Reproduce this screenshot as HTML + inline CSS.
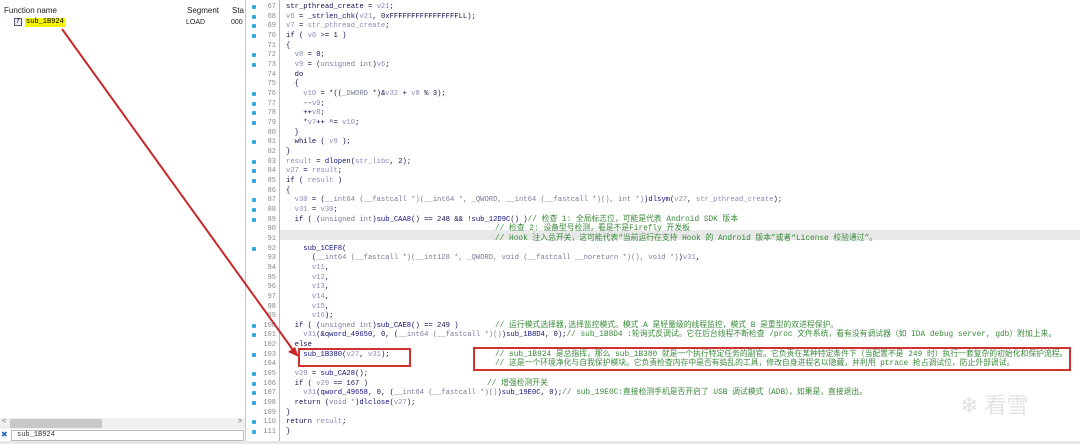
<!DOCTYPE html>
<html><head><meta charset="utf-8"><style>
*{margin:0;padding:0;box-sizing:border-box}
body{width:1080px;height:444px;overflow:hidden;background:#fff;position:relative;font-family:"Liberation Sans","Noto Sans CJK SC",sans-serif}
#left{position:absolute;left:0;top:0;width:246px;height:444px;background:#fff;border-right:1px solid #c8c8c8}
.hdr{position:absolute;top:6px;font-size:8px;color:#222}
#gut{position:absolute;left:247px;top:0;width:33px;height:444px;background:#fff;border-right:1px solid #9ec4e0}
.ln{position:absolute;left:0;width:1080px;height:10px;font-family:"Liberation Mono","Noto Sans CJK SC",monospace;font-size:7.2px;line-height:10px;white-space:pre;color:#101050}
.n{position:absolute;left:256px;width:20px;text-align:right;color:#8a8a8a;font-size:7px}
.d{position:absolute;left:252px;top:3px;width:4px;height:4px;background:#33aadd;border-radius:1px}
.t{position:absolute;left:286px}
.cc{position:absolute;left:495px;color:#3a8a3a;font-size:7.8px}
.v{color:#8a8ab8}.f{color:#101080}.c{color:#3a8a3a;font-size:7.8px}.g{color:#7a7a9a}
</style></head><body>
<div id="left">
<div class="hdr" style="left:4px">Function name</div>
<div class="hdr" style="left:187px">Segment</div>
<div class="hdr" style="left:232px">Sta</div>
<div style="position:absolute;left:14px;top:18px;width:8px;height:8px;border:1px solid #557;background:#eef;font-size:6px;line-height:6px;text-align:center;font-style:italic">f</div>
<div style="position:absolute;left:25px;top:18px;height:9px;background:#f4f400;font-size:7px;line-height:9px;padding:0 1px;font-family:'Liberation Mono',monospace">sub_1B924</div>
<div style="position:absolute;left:186px;top:19px;font-size:7px;color:#222">LOAD</div>
<div style="position:absolute;left:231px;top:19px;font-size:7px;color:#222">000</div>
<div style="position:absolute;left:0;top:418px;width:245px;height:11px;background:#f0f0f0"></div>
<div style="position:absolute;left:10px;top:419px;width:92px;height:9px;background:#c8c8c8"></div>
<div style="position:absolute;left:2px;top:418px;font-size:7px;color:#666">&lt;</div>
<div style="position:absolute;left:238px;top:418px;font-size:7px;color:#666">&gt;</div>
<div style="position:absolute;left:1px;top:430px;font-size:8px;color:#2266cc">✖</div>
<div style="position:absolute;left:11px;top:430px;width:233px;height:11px;border:1px solid #bbb;font-size:7px;line-height:9px;padding-left:5px;font-family:'Liberation Mono',monospace;color:#333">sub_1B924</div>
</div>
<div id="gut"></div>
<div style="position:absolute;left:280px;top:230px;width:800px;height:10px;background:#e8e8e8"></div>
<div id="code"></div>
<div style="position:absolute;left:298px;top:348px;width:113px;height:19px;border:2px solid #d03030"></div>
<div style="position:absolute;left:473px;top:347px;width:598px;height:24px;border:2px solid #d03030"></div>
<svg style="position:absolute;left:0;top:0" width="1080" height="444"><line x1="62" y1="29" x2="293" y2="350" stroke="#c82828" stroke-width="2"/><polygon points="299,357 288,352 295,347" fill="#c82828"/></svg>
<div style="position:absolute;left:960px;top:388px;font-size:22px;color:#e2e2e2">❄ 看雪</div>
<div style="position:absolute;left:0;top:441px;width:1080px;height:3px;background:#e8e8e8"></div>
<script>
const L=[
[67,1,'str_pthread_create = <span class=v>v21</span>;'],
[68,1,'<span class=v>v6</span> = <span class=f>_strlen_chk</span>(<span class=v>v21</span>, 0xFFFFFFFFFFFFFFFFLL);'],
[69,1,'<span class=v>v7</span> = <span class=v>str_pthread_create</span>;'],
[70,1,'if ( <span class=v>v6</span> >= 1 )'],
[71,0,'{'],
[72,1,'  <span class=v>v8</span> = 0;'],
[73,1,'  <span class=v>v9</span> = (<span class=g>unsigned int</span>)<span class=v>v6</span>;'],
[74,0,'  do'],
[75,0,'  {'],
[76,1,'    <span class=v>v10</span> = *((<span class=g>_DWORD</span> *)&amp;<span class=v>v32</span> + <span class=v>v8</span> % 3);'],
[77,1,'    --<span class=v>v9</span>;'],
[78,1,'    ++<span class=v>v8</span>;'],
[79,1,'    *<span class=v>v7</span>++ ^= <span class=v>v10</span>;'],
[80,0,'  }'],
[81,1,'  while ( <span class=v>v9</span> );'],
[82,0,'}'],
[83,1,'<span class=v>result</span> = <span class=f>dlopen</span>(<span class=v>str_libc</span>, 2);'],
[84,1,'<span class=v>v27</span> = <span class=v>result</span>;'],
[85,1,'if ( <span class=v>result</span> )'],
[86,0,'{'],
[87,1,'  <span class=v>v30</span> = (<span class=g>__int64 (__fastcall *)(__int64 *, _QWORD, __int64 (__fastcall *)(), int *)</span>)<span class=f>dlsym</span>(<span class=v>v27</span>, <span class=v>str_pthread_create</span>);'],
[88,1,'  <span class=v>v31</span> = <span class=v>v30</span>;'],
[89,1,'  if ( (<span class=g>unsigned int</span>)<span class=f>sub_CAA8</span>() == 248 &amp;&amp; !<span class=f>sub_12D9C</span>() )<span class=c>// 检查 1: 全局标志位，可能是代表 Android SDK 版本</span>'],
[90,0,'','// 检查 2: 设备型号检测，看是不是Firefly 开发板'],
[91,0,'','// Hook 注入总开关，这可能代表“当前运行在支持 Hook 的 Android 版本”或者“License 校验通过”。'],
[92,1,'    <span class=f>sub_1CEF8</span>('],
[93,0,'      (<span class=g>__int64 (__fastcall *)(__int128 *, _QWORD, void (__fastcall __noreturn *)(), void *)</span>)<span class=v>v31</span>,'],
[94,0,'      <span class=v>v11</span>,'],
[95,0,'      <span class=v>v12</span>,'],
[96,0,'      <span class=v>v13</span>,'],
[97,0,'      <span class=v>v14</span>,'],
[98,0,'      <span class=v>v15</span>,'],
[99,0,'      <span class=v>v16</span>);'],
[100,1,'  if ( (<span class=g>unsigned int</span>)<span class=f>sub_CAE8</span>() == 249 )','// 运行模式选择器,选择监控模式。模式 A 是轻量级的线程监控，模式 B 是重型的双进程保护。'],
[101,1,'    <span class=v>v31</span>(&amp;<span class=f>qword_49650</span>, 0, (<span class=g>__int64 (__fastcall *)()</span>)<span class=f>sub_1B8D4</span>, 0);<span class=c>// sub_1B8D4 :轮询式反调试。它在后台线程不断检查 /proc 文件系统，看有没有调试器（如 IDA debug server, gdb）附加上来。</span>'],
[102,0,'  else'],
[103,1,'    <span class=f>sub_1B380</span>(<span class=v>v27</span>, <span class=v>v31</span>);','// sub_1B924 是总指挥，那么 sub_1B380 就是一个执行特定任务的副官。它负责在某种特定条件下（当配置不是 249 时）执行一套复杂的初始化和保护流程。'],
[104,0,'','// 这是一个环境净化与自我保护模块。它负责检查内存中是否有捣乱的工具，修改自身进程名以隐藏，并利用 ptrace 抢占调试位，防止外部调试。'],
[105,1,'  <span class=v>v29</span> = <span class=f>sub_CA28</span>();'],
[106,1,'  if ( <span class=v>v29</span> == 167 )','// 增强检测开关',487],
[107,1,'    <span class=v>v31</span>(<span class=f>qword_49658</span>, 0, (<span class=g>__int64 (__fastcall *)()</span>)<span class=f>sub_19E0C</span>, 0);<span class=c>// sub_19E0C:直接检测手机是否开启了 USB 调试模式（ADB），如果是，直接退出。</span>'],
[108,1,'  return (<span class=g>void *</span>)<span class=f>dlclose</span>(<span class=v>v27</span>);'],
[109,0,'}'],
[110,1,'return <span class=v>result</span>;'],
[111,1,'}']];
let h='';
for(const [n,d,t,c,x] of L){const y=2+(n-67)*9.66;
h+=`<div class=ln style="top:${y.toFixed(1)}px">${d?'<div class=d></div>':''}<span class=n>${n}</span><span class=t>${t}</span>${c?`<span class=cc${x?` style="left:${x}px"`:''}>${c}</span>`:''}</div>`;}
document.getElementById('code').innerHTML=h;
</script>
</body></html>
